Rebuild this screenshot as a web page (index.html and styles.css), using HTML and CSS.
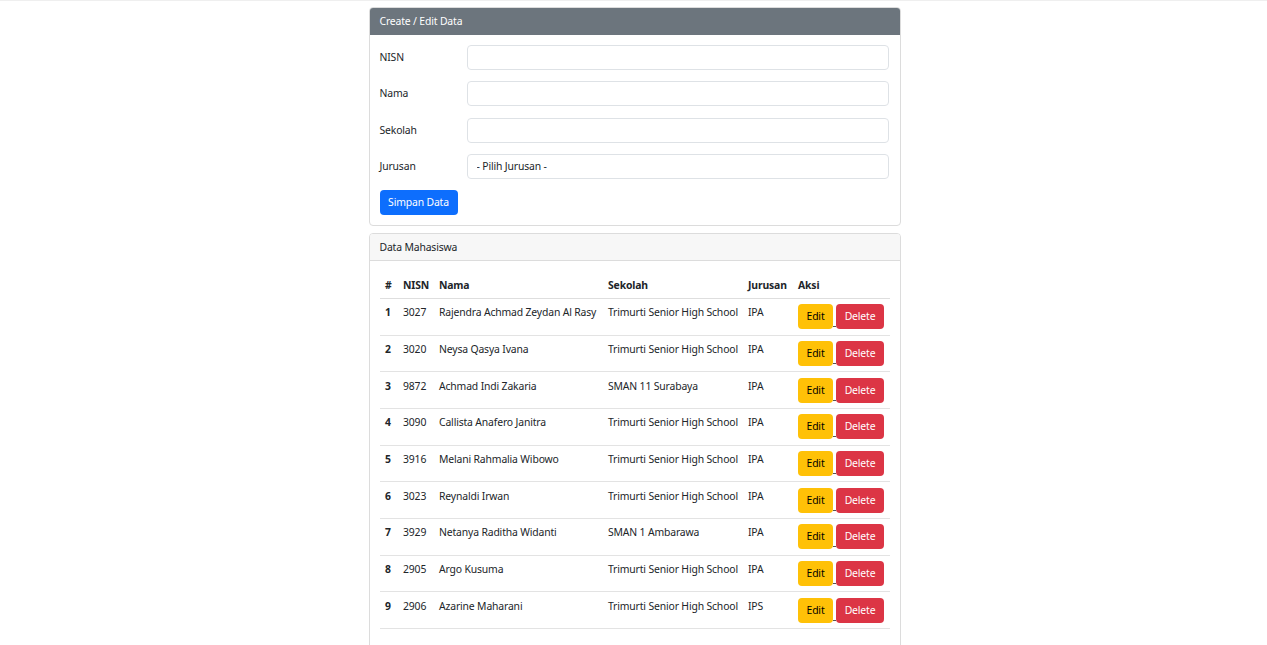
FILE: index.html
```html
<!DOCTYPE html>
<html lang="id">
<head>
<meta charset="utf-8">
<title>Data Mahasiswa</title>
<link rel="stylesheet" href="styles.css">
</head>
<body>
<div class="topline"></div>
<main class="container">
  <section class="card">
    <div class="card-header dark">Create / Edit Data</div>
    <div class="card-body">
      <form class="form">
        <div class="form-row">
          <label class="form-label">NISN</label>
          <input class="form-control" type="text">
        </div>
        <div class="form-row">
          <label class="form-label">Nama</label>
          <input class="form-control" type="text">
        </div>
        <div class="form-row">
          <label class="form-label">Sekolah</label>
          <input class="form-control" type="text">
        </div>
        <div class="form-row">
          <label class="form-label">Jurusan</label>
          <select class="form-control form-select"><option>- Pilih Jurusan -</option></select>
        </div>
        <button class="btn btn-primary" type="button">Simpan Data</button>
      </form>
    </div>
  </section>

  <section class="card card-gap">
    <div class="card-header light">Data Mahasiswa</div>
    <div class="card-body">
      <table class="table">
        <colgroup>
          <col class="c-no"><col class="c-nisn"><col class="c-nama"><col class="c-sekolah"><col class="c-jur"><col class="c-aksi">
        </colgroup>
        <thead>
          <tr><th>#</th><th>NISN</th><th>Nama</th><th>Sekolah</th><th>Jurusan</th><th>Aksi</th></tr>
        </thead>
        <tbody>
          <tr><th>1</th><td>3027</td><td>Rajendra Achmad Zeydan Al Rasy</td><td>Trimurti Senior High School</td><td>IPA</td><td class="aksi"><a class="btn btn-warning">Edit</a><span class="sep"></span><a class="btn btn-danger">Delete</a></td></tr>
          <tr><th>2</th><td>3020</td><td>Neysa Qasya Ivana</td><td>Trimurti Senior High School</td><td>IPA</td><td class="aksi"><a class="btn btn-warning">Edit</a><span class="sep"></span><a class="btn btn-danger">Delete</a></td></tr>
          <tr><th>3</th><td>9872</td><td>Achmad Indi Zakaria</td><td>SMAN 11 Surabaya</td><td>IPA</td><td class="aksi"><a class="btn btn-warning">Edit</a><span class="sep"></span><a class="btn btn-danger">Delete</a></td></tr>
          <tr><th>4</th><td>3090</td><td>Callista Anafero Janitra</td><td>Trimurti Senior High School</td><td>IPA</td><td class="aksi"><a class="btn btn-warning">Edit</a><span class="sep"></span><a class="btn btn-danger">Delete</a></td></tr>
          <tr><th>5</th><td>3916</td><td>Melani Rahmalia Wibowo</td><td>Trimurti Senior High School</td><td>IPA</td><td class="aksi"><a class="btn btn-warning">Edit</a><span class="sep"></span><a class="btn btn-danger">Delete</a></td></tr>
          <tr><th>6</th><td>3023</td><td>Reynaldi Irwan</td><td>Trimurti Senior High School</td><td>IPA</td><td class="aksi"><a class="btn btn-warning">Edit</a><span class="sep"></span><a class="btn btn-danger">Delete</a></td></tr>
          <tr><th>7</th><td>3929</td><td>Netanya Raditha Widanti</td><td>SMAN 1 Ambarawa</td><td>IPA</td><td class="aksi"><a class="btn btn-warning">Edit</a><span class="sep"></span><a class="btn btn-danger">Delete</a></td></tr>
          <tr><th>8</th><td>2905</td><td>Argo Kusuma</td><td>Trimurti Senior High School</td><td>IPA</td><td class="aksi"><a class="btn btn-warning">Edit</a><span class="sep"></span><a class="btn btn-danger">Delete</a></td></tr>
          <tr><th>9</th><td>2906</td><td>Azarine Maharani</td><td>Trimurti Senior High School</td><td>IPS</td><td class="aksi"><a class="btn btn-warning">Edit</a><span class="sep"></span><a class="btn btn-danger">Delete</a></td></tr>
        </tbody>
      </table>
    </div>
  </section>
</main>
</body>
</html>
```

FILE: styles.css
```css
* { box-sizing: border-box; }
html, body { margin: 0; padding: 0; background: #fff; }
body {
  font-family: "Noto Sans", "Open Sans", "Liberation Sans", sans-serif;
  font-size: 10.4px;
  letter-spacing: -0.15px;
  line-height: 16.8px;
  color: #212529;
}
.topline { height: 1px; background: #efefef; }
.container {
  width: 532px;
  margin: 6px auto 0;
  position: relative;
  left: 1px;
}
.card {
  border: 1px solid #dcdcdc;
  border-radius: 4px;
  background: #fff;
  overflow: hidden;
}
.card-gap { margin-top: 7px; }
.card-header {
  height: 27px;
  padding: 0 10px;
  display: flex;
  align-items: center;
  border-bottom: 1px solid #dcdcdc;
}
.card-header.dark { background: #6c757d; color: #fff; border-bottom-color: #6c757d; }
.card-header.light { background: #f7f7f7; color: #212529; }
.card-body { padding: 10px 11px 10px 10px; }
.form { display: flex; flex-direction: column; align-items: flex-start; }
.form-row {
  display: flex;
  align-items: center;
  width: 100%;
  margin-bottom: 11.3px;
}
.form-label { width: 87px; flex: none; }
.form-control {
  flex: 1;
  height: 25px;
  border: 1px solid #dee2e6;
  border-radius: 4px;
  background: #fff;
  font: inherit;
  letter-spacing: inherit;
  color: #212529;
  padding: 0 9px;
  outline: none;
}
.form-select { appearance: none; -webkit-appearance: none; }
.btn {
  display: inline-flex;
  align-items: center;
  justify-content: center;
  height: 25px;
  padding: 0 6px;
  border: 0;
  border-radius: 4px;
  font: inherit;
  letter-spacing: inherit;
  white-space: nowrap;
  cursor: pointer;
  text-decoration: none;
}
.btn-primary { background: #0d6efd; color: #fff; width: 78px; }
.btn-warning { background: #ffc107; color: #000; width: 35px; }
.btn-danger { background: #dc3545; color: #fff; width: 48px; }
.table { width: 100%; border-collapse: collapse; table-layout: fixed; margin: 0 0 11px; }
.c-no { width: 18px; }
.c-nisn { width: 36px; }
.c-nama { width: 169px; }
.c-sekolah { width: 140px; }
.c-jur { width: 50px; }
.c-aksi { width: 97px; }
.table th, .table td {
  text-align: left;
  vertical-align: top;
  padding: 5.33px 5.5px;
  border-bottom: 1px solid #e3e3e3;
  white-space: nowrap;
}
.table thead th { font-weight: 700; border-bottom-color: #dedede; padding-top: 5.5px; padding-bottom: 4.5px; }
.table tbody th { font-weight: 700; }
.aksi { font-size: 0; }
.aksi .btn { font-size: 10.4px; vertical-align: top; }
.sep {
  display: inline-block;
  width: 3px;
  height: 23px;
  border-bottom: 1px solid #555;
  vertical-align: top;
}
```
